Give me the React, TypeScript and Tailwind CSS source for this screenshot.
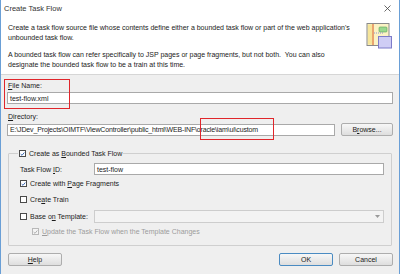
function Check({ checked = false, disabled = false }: { checked?: boolean; disabled?: boolean }) {
  return (
    <span
      className={`w-[7px] h-[7px] shrink-0 border flex items-center justify-center ${
        disabled ? "border-[#b8b8b8] bg-[#f4f4f4]" : "border-[#4a4a4a] bg-white"
      }`}
    >
      {checked && (
        <svg width="6" height="6" viewBox="0 0 6 6">
          <path
            d="M0.8 3.1 L2.4 4.6 L5.2 1.2"
            fill="none"
            stroke={disabled ? "#a8a8a8" : "#2b5cae"}
            strokeWidth="1.1"
          />
        </svg>
      )}
    </span>
  );
}

function Btn({ label, primary = false, w = "w-[54px]" }: { label: React.ReactNode; primary?: boolean; w?: string }) {
  return (
    <div
      className={`${w} h-[13px] rounded-[2px] border bg-gradient-to-b from-[#f7f7f7] to-[#dedede] flex items-center justify-center text-[7px] ${
        primary ? "border-[#4a8bc2]" : "border-[#adadad]"
      }`}
    >
      {label}
    </div>
  );
}

function TaskFlowIcon() {
  return (
    <svg width="27" height="26" viewBox="0 0 27 26">
      <rect x="1" y="0.5" width="22" height="22" fill="#fbf3c4" stroke="#8a8a8a" />
      <rect x="2" y="1.5" width="4" height="20" fill="#f6e59a" />
      <line x1="7" y1="1" x2="7" y2="22" stroke="#e0703a" strokeWidth="1.2" />
      <rect x="13" y="4" width="8" height="5" rx="1" fill="#9bd88e" stroke="#5aa65a" strokeWidth="0.6" />
      <path d="M8 10 H18" stroke="#7a7acf" strokeWidth="0.8" strokeDasharray="1 1" />
      <rect x="12.5" y="13.5" width="13" height="11.5" fill="#cfcdf5" stroke="#7d7bc9" />
    </svg>
  );
}

export default function App() {
  return (
    <div className="w-[400px] h-[274px] overflow-hidden relative bg-[#efefef] border-l border-r border-[#6a9fd6] flex flex-col text-[#1b1b1b] font-[Liberation_Sans,Arial,sans-serif] text-[7px] leading-[9px]">
      {/* title bar */}
      <div className="h-[16px] bg-white flex items-center justify-between pl-[3px] pr-[8px] shrink-0">
        <span className="text-[7.5px] text-[#333]">Create Task Flow</span>
        <svg width="7" height="7" viewBox="0 0 7 7">
          <path d="M0.5 0.5 L6.5 6.5 M6.5 0.5 L0.5 6.5" stroke="#444" strokeWidth="0.8" />
        </svg>
      </div>

      {/* description header */}
      <div className="h-[59px] bg-white border-b border-[#d6d6d6] flex justify-between pl-[7px] pr-[6px] pt-[7px] shrink-0">
        <div className="leading-[10px]">
          <p className="mb-[7px]">
            Create a task flow source file whose contents define either a bounded task flow or part of the web application's
            <br />
            unbounded task flow.
          </p>
          <p>
            A bounded task flow can refer specifically to JSP pages or page fragments, but not both.&nbsp; You can also
            <br />
            designate the bounded task flow to be a train at this time.
          </p>
        </div>
        <div>
          <TaskFlowIcon />
        </div>
      </div>

      {/* form */}
      <div className="flex flex-col px-[6px] pt-[6px]">
        <div className="pl-[1px] h-[10px]">
          <u>F</u>ile Name:
        </div>
        <div className="h-[12px] bg-white border border-[#a9a9a9] flex items-center pl-[2px] mt-[1px]">test-flow.xml</div>

        <div className="pl-[1px] h-[10px] mt-[8px]">
          <u>D</u>irectory:
        </div>
        <div className="flex items-center gap-[6px] mt-[1px]">
          <div className="flex-1 h-[12px] bg-white border border-[#a9a9a9] flex items-center pl-[2px] whitespace-nowrap overflow-hidden tracking-[-0.15px]">
            E:\JDev_Projects\OIMTF\ViewController\public_html\WEB-INF\oracle\iam\ui\custom
          </div>
          <Btn w="w-[52px]" label={<span>B<u>r</u>owse...</span>} />
        </div>

        {/* bounded task flow group */}
        <div className="relative mt-[17px] ml-[1px] mr-[1px] h-[93px] border border-[#cfcfcf] rounded-[1px] px-[11px]">
          <div className="absolute -top-[5px] left-[9px] bg-[#efefef] px-[1px] flex items-center gap-[3px]">
            <Check checked />
            <span>
              Create as <u>B</u>ounded Task Flow
            </span>
          </div>

          <div className="flex items-center mt-[9px] h-[12px]">
            <span className="w-[74px]">
              Task Flow <u>I</u>D:
            </span>
            <div className="flex-1 h-[12px] bg-white border border-[#a9a9a9] flex items-center pl-[2px] mr-[-4px]">test-flow</div>
          </div>

          <div className="flex items-center gap-[3px] mt-[4px] h-[9px]">
            <Check checked />
            <span>
              Create with <u>P</u>age Fragments
            </span>
          </div>

          <div className="flex items-center gap-[3px] mt-[7px] h-[9px]">
            <Check />
            <span>
              Cre<u>a</u>te Train
            </span>
          </div>

          <div className="flex items-center mt-[6px] h-[13px]">
            <div className="w-[74px] flex items-center gap-[3px]">
              <Check />
              <span>
                Base o<u>n</u> Template:
              </span>
            </div>
            <div className="flex-1 h-[13px] bg-[#f3f3f3] border border-[#cdcdcd] flex items-center justify-end pr-[3px] mr-[-4px]">
              <svg width="5" height="3" viewBox="0 0 5 3">
                <path d="M0 0 H5 L2.5 3 Z" fill="#9a9a9a" />
              </svg>
            </div>
          </div>

          <div className="flex items-center gap-[3px] mt-[4px] ml-[12px] h-[9px] text-[#9c9c9c]">
            <Check checked disabled />
            <span>
              <u>U</u>pdate the Task Flow when the Template Changes
            </span>
          </div>
        </div>

        {/* buttons */}
        <div className="flex items-center mt-[7px] pl-[1px]">
          <Btn label={<span><u>H</u>elp</span>} />
          <div className="flex-1" />
          <Btn label="OK" primary />
          <div className="w-[6px]" />
          <Btn label="Cancel" />
        </div>
      </div>

      {/* red annotation boxes */}
      <div className="absolute left-[3px] top-[79px] w-[66px] h-[30px] border-[1.5px] border-[#e0262b]" />
      <div className="absolute left-[199px] top-[118px] w-[74px] h-[22px] border-[1.5px] border-[#e0262b]" />
    </div>
  );
}
